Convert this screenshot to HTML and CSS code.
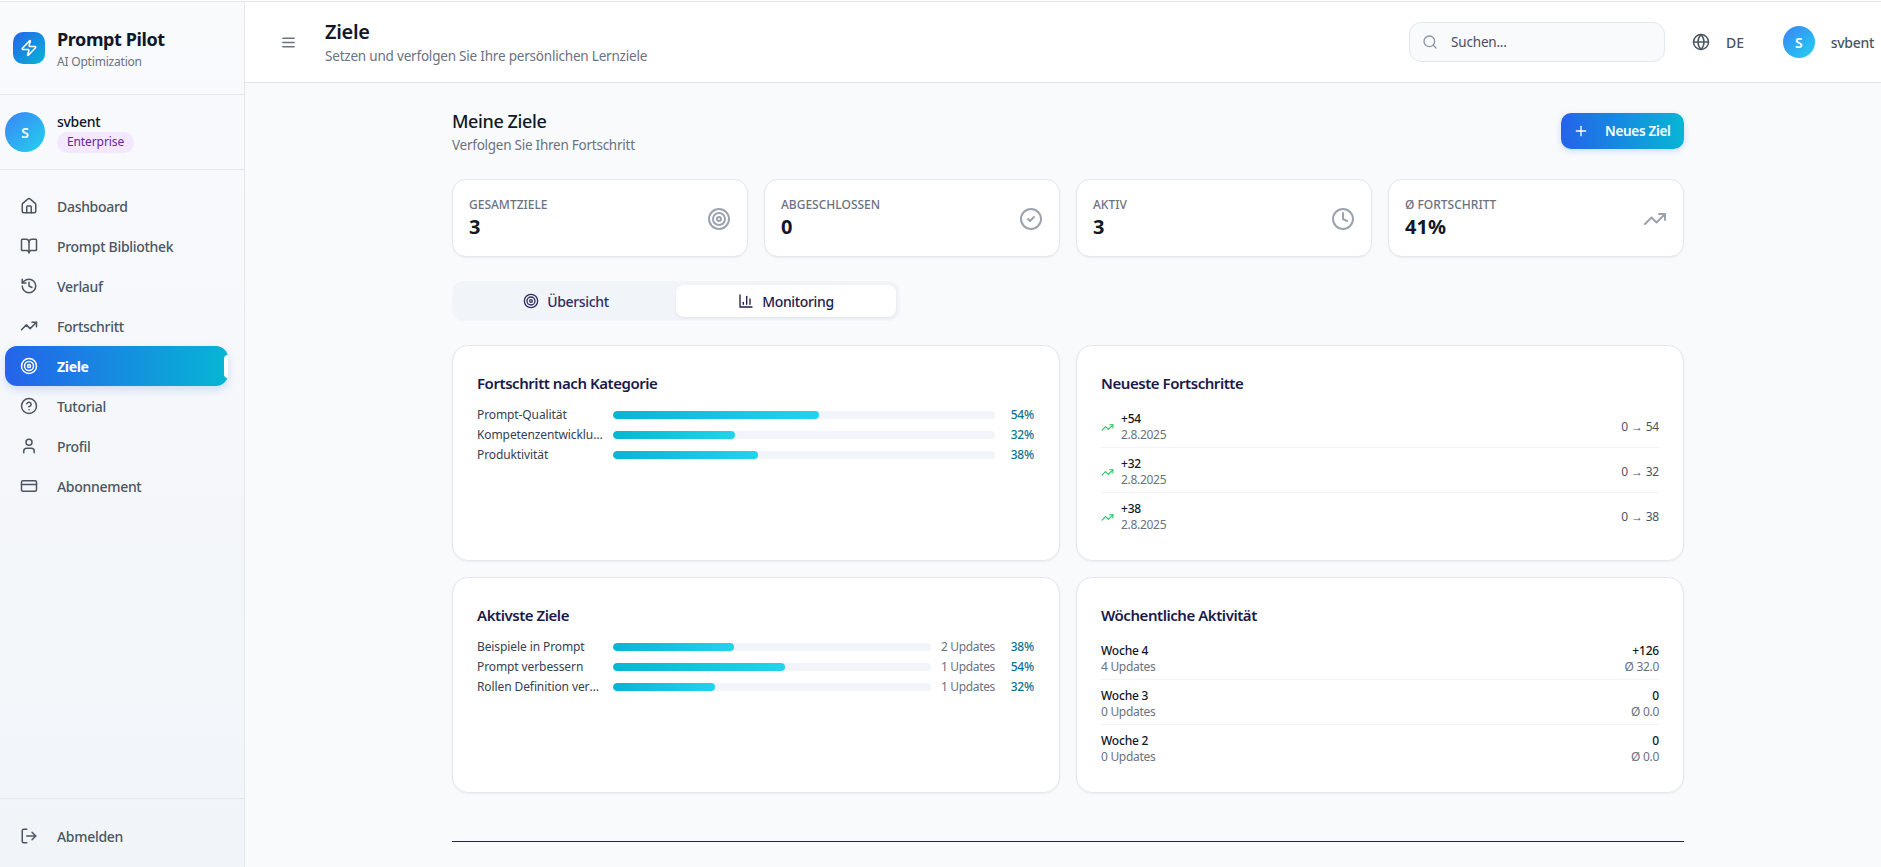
FILE: index.html
```html
<!DOCTYPE html>
<html lang="de">
<head>
<meta charset="utf-8">
<title>Ziele – Prompt Pilot</title>
<link rel="stylesheet" href="styles.css">
</head>
<body>
<svg class="sprite" aria-hidden="true">
  <symbol id="i-house" viewBox="0 0 24 24"><path d="M15 21v-8a1 1 0 0 0-1-1h-4a1 1 0 0 0-1 1v8"/><path d="M3 10a2 2 0 0 1 .709-1.528l7-5.999a2 2 0 0 1 2.582 0l7 5.999A2 2 0 0 1 21 10v9a2 2 0 0 1-2 2H5a2 2 0 0 1-2-2z"/></symbol>
  <symbol id="i-book" viewBox="0 0 24 24"><path d="M12 7v14"/><path d="M3 18a1 1 0 0 1-1-1V4a1 1 0 0 1 1-1h5a4 4 0 0 1 4 4 4 4 0 0 1 4-4h5a1 1 0 0 1 1 1v13a1 1 0 0 1-1 1h-6a3 3 0 0 0-3 3 3 3 0 0 0-3-3z"/></symbol>
  <symbol id="i-history" viewBox="0 0 24 24"><path d="M3 12a9 9 0 1 0 9-9 9.75 9.75 0 0 0-6.74 2.74L3 8"/><path d="M3 3v5h5"/><path d="M12 7v5l4 2"/></symbol>
  <symbol id="i-trend" viewBox="0 0 24 24"><polyline points="22 7 13.5 15.5 8.5 10.5 2 17"/><polyline points="16 7 22 7 22 13"/></symbol>
  <symbol id="i-target" viewBox="0 0 24 24"><circle cx="12" cy="12" r="10"/><circle cx="12" cy="12" r="6"/><circle cx="12" cy="12" r="2"/></symbol>
  <symbol id="i-help" viewBox="0 0 24 24"><circle cx="12" cy="12" r="10"/><path d="M9.09 9a3 3 0 0 1 5.83 1c0 2-3 3-3 3"/><path d="M12 17h.01"/></symbol>
  <symbol id="i-user" viewBox="0 0 24 24"><path d="M19 21v-2a4 4 0 0 0-4-4H9a4 4 0 0 0-4 4v2"/><circle cx="12" cy="7" r="4"/></symbol>
  <symbol id="i-card" viewBox="0 0 24 24"><rect x="2" y="5" width="20" height="14" rx="2"/><line x1="2" y1="10" x2="22" y2="10"/></symbol>
  <symbol id="i-logout" viewBox="0 0 24 24"><path d="M9 21H5a2 2 0 0 1-2-2V5a2 2 0 0 1 2-2h4"/><polyline points="16 17 21 12 16 7"/><line x1="21" y1="12" x2="9" y2="12"/></symbol>
  <symbol id="i-zap" viewBox="0 0 24 24"><path d="M4 14a1 1 0 0 1-.78-1.63l9.9-10.2a.5.5 0 0 1 .86.46l-1.92 6.02A1 1 0 0 0 13 10h7a1 1 0 0 1 .78 1.63l-9.9 10.2a.5.5 0 0 1-.86-.46l1.92-6.02A1 1 0 0 0 11 14z"/></symbol>
  <symbol id="i-menu" viewBox="0 0 24 24"><line x1="4" y1="6" x2="20" y2="6"/><line x1="4" y1="12" x2="20" y2="12"/><line x1="4" y1="18" x2="20" y2="18"/></symbol>
  <symbol id="i-search" viewBox="0 0 24 24"><circle cx="11" cy="11" r="8"/><path d="m21 21-4.3-4.3"/></symbol>
  <symbol id="i-globe" viewBox="0 0 24 24"><circle cx="12" cy="12" r="10"/><path d="M12 2a14.5 14.5 0 0 0 0 20 14.5 14.5 0 0 0 0-20"/><path d="M2 12h20"/></symbol>
  <symbol id="i-plus" viewBox="0 0 24 24"><path d="M5 12h14"/><path d="M12 5v14"/></symbol>
  <symbol id="i-check" viewBox="0 0 24 24"><circle cx="12" cy="12" r="10"/><path d="m9 12 2 2 4-4"/></symbol>
  <symbol id="i-clock" viewBox="0 0 24 24"><circle cx="12" cy="12" r="10"/><polyline points="12 6 12 12 16 14"/></symbol>
  <symbol id="i-chart" viewBox="0 0 24 24"><path d="M3 3v18h18"/><path d="M18 17V9"/><path d="M13 17V5"/><path d="M8 17v-3"/></symbol>
</svg>

<div class="topline"></div>
<div class="app">
  <aside class="sidebar">
    <div class="brand">
      <div class="logo"><svg class="icon icon-18"><use href="#i-zap"/></svg></div>
      <div>
        <div class="brand-name">Prompt Pilot</div>
        <div class="brand-sub">AI Optimization</div>
      </div>
    </div>
    <div class="account">
      <div class="avatar avatar-lg">S</div>
      <div>
        <div class="account-name">svbent</div>
        <span class="badge">Enterprise</span>
      </div>
    </div>
    <nav class="nav">
      <a class="nav-item"><svg class="icon icon-18"><use href="#i-house"/></svg>Dashboard</a>
      <a class="nav-item"><svg class="icon icon-18"><use href="#i-book"/></svg>Prompt Bibliothek</a>
      <a class="nav-item"><svg class="icon icon-18"><use href="#i-history"/></svg>Verlauf</a>
      <a class="nav-item"><svg class="icon icon-18"><use href="#i-trend"/></svg>Fortschritt</a>
      <a class="nav-item active"><svg class="icon icon-18"><use href="#i-target"/></svg>Ziele<span class="marker"></span></a>
      <a class="nav-item"><svg class="icon icon-18"><use href="#i-help"/></svg>Tutorial</a>
      <a class="nav-item"><svg class="icon icon-18"><use href="#i-user"/></svg>Profil</a>
      <a class="nav-item"><svg class="icon icon-18"><use href="#i-card"/></svg>Abonnement</a>
    </nav>
    <div class="sidebar-foot">
      <a class="nav-item"><svg class="icon icon-18"><use href="#i-logout"/></svg>Abmelden</a>
    </div>
  </aside>

  <div class="main">
    <header class="header">
      <svg class="icon menu-icon"><use href="#i-menu"/></svg>
      <div class="header-title">
        <h1>Ziele</h1>
        <p>Setzen und verfolgen Sie Ihre persönlichen Lernziele</p>
      </div>
      <div class="search"><svg class="icon icon-16"><use href="#i-search"/></svg><span>Suchen...</span></div>
      <svg class="icon icon-18 globe"><use href="#i-globe"/></svg>
      <span class="lang">DE</span>
      <div class="avatar avatar-sm">S</div>
      <span class="header-user">svbent</span>
    </header>

    <main class="page">
      <div class="page-head">
        <div>
          <h2>Meine Ziele</h2>
          <p>Verfolgen Sie Ihren Fortschritt</p>
        </div>
        <button class="primary"><svg class="icon icon-16"><use href="#i-plus"/></svg>Neues Ziel</button>
      </div>

      <section class="stats">
        <div class="stat"><div><div class="stat-label">Gesamtziele</div><div class="stat-value">3</div></div><svg class="icon icon-24"><use href="#i-target"/></svg></div>
        <div class="stat"><div><div class="stat-label">Abgeschlossen</div><div class="stat-value">0</div></div><svg class="icon icon-24"><use href="#i-check"/></svg></div>
        <div class="stat"><div><div class="stat-label">Aktiv</div><div class="stat-value">3</div></div><svg class="icon icon-24"><use href="#i-clock"/></svg></div>
        <div class="stat"><div><div class="stat-label">Ø Fortschritt</div><div class="stat-value">41%</div></div><svg class="icon icon-24"><use href="#i-trend"/></svg></div>
      </section>

      <div class="tabs">
        <div class="tab"><svg class="icon icon-16"><use href="#i-target"/></svg>Übersicht</div>
        <div class="tab selected"><svg class="icon icon-16"><use href="#i-chart"/></svg>Monitoring</div>
      </div>

      <section class="panels">
        <div class="panel">
          <h3>Fortschritt nach Kategorie</h3>
          <div class="bars">
            <div class="bar-row"><span class="bar-label">Prompt-Qualität</span><div class="track"><div class="fill" style="width:54%"></div></div><span class="pct">54%</span></div>
            <div class="bar-row"><span class="bar-label">Kompetenzentwicklung</span><div class="track"><div class="fill" style="width:32%"></div></div><span class="pct">32%</span></div>
            <div class="bar-row"><span class="bar-label">Produktivität</span><div class="track"><div class="fill" style="width:38%"></div></div><span class="pct">38%</span></div>
          </div>
        </div>

        <div class="panel">
          <h3>Neueste Fortschritte</h3>
          <div class="list">
            <div class="list-row"><svg class="icon up"><use href="#i-trend"/></svg><div class="grow"><div class="strong">+54</div><div class="muted">2.8.2025</div></div><span class="change">0 → 54</span></div>
            <div class="list-row"><svg class="icon up"><use href="#i-trend"/></svg><div class="grow"><div class="strong">+32</div><div class="muted">2.8.2025</div></div><span class="change">0 → 32</span></div>
            <div class="list-row"><svg class="icon up"><use href="#i-trend"/></svg><div class="grow"><div class="strong">+38</div><div class="muted">2.8.2025</div></div><span class="change">0 → 38</span></div>
          </div>
        </div>

        <div class="panel">
          <h3>Aktivste Ziele</h3>
          <div class="bars">
            <div class="bar-row"><span class="bar-label">Beispiele in Prompt</span><div class="track"><div class="fill" style="width:38%"></div></div><span class="updates">2 Updates</span><span class="pct">38%</span></div>
            <div class="bar-row"><span class="bar-label">Prompt verbessern</span><div class="track"><div class="fill" style="width:54%"></div></div><span class="updates">1 Updates</span><span class="pct">54%</span></div>
            <div class="bar-row"><span class="bar-label">Rollen Definition verbessern</span><div class="track"><div class="fill" style="width:32%"></div></div><span class="updates">1 Updates</span><span class="pct">32%</span></div>
          </div>
        </div>

        <div class="panel">
          <h3>Wöchentliche Aktivität</h3>
          <div class="list">
            <div class="list-row"><div class="grow"><div class="strong">Woche 4</div><div class="muted">4 Updates</div></div><div class="right"><div class="strong">+126</div><div class="muted">Ø 32.0</div></div></div>
            <div class="list-row"><div class="grow"><div class="strong">Woche 3</div><div class="muted">0 Updates</div></div><div class="right"><div class="strong">0</div><div class="muted">Ø 0.0</div></div></div>
            <div class="list-row"><div class="grow"><div class="strong">Woche 2</div><div class="muted">0 Updates</div></div><div class="right"><div class="strong">0</div><div class="muted">Ø 0.0</div></div></div>
          </div>
        </div>
      </section>

      <hr class="rule">
    </main>
  </div>
</div>
</body>
</html>
```

FILE: styles.css
```css
* { box-sizing: border-box; }
html, body { margin: 0; height: 100%; overflow: hidden; }
body {
  font-family: "Noto Sans", "Open Sans", "Liberation Sans", sans-serif;
  background: #f8fafc;
  color: #111827;
}
h1, h2, h3, p { margin: 0; }
.sprite { display: none; }

.icon {
  display: block;
  flex: none;
  fill: none;
  stroke: currentColor;
  stroke-width: 2;
  stroke-linecap: round;
  stroke-linejoin: round;
}
.icon-16 { width: 16px; height: 16px; }
.icon-18 { width: 18px; height: 18px; }
.icon-24 { width: 24px; height: 24px; }

.topline { height: 2px; background: #fff; border-bottom: 1px solid #e2e5e9; }
.app { display: flex; height: 865px; }

/* sidebar */
.sidebar {
  width: 245px;
  flex: none;
  display: flex;
  flex-direction: column;
  border-right: 1px solid #e2e8f0;
  background: linear-gradient(180deg, #f9fafc 0%, #f1f5f9 100%);
}
.brand {
  height: 93px;
  display: flex;
  align-items: center;
  gap: 12px;
  padding: 0 13px;
  border-bottom: 1px solid #e2e8f0;
}
.logo {
  width: 32px;
  height: 32px;
  border-radius: 10px;
  display: flex;
  align-items: center;
  justify-content: center;
  color: #fff;
  background: linear-gradient(135deg, #2563eb, #06b6d4);
}
.brand-name { font-size: 18px; line-height: 24px; font-weight: 700; letter-spacing: -0.4px; color: #0f172a; margin-top: 1px; }
.brand-sub { font-size: 12px; line-height: 16px; letter-spacing: -0.2px; color: #6b7280; margin-top: 3px; }
.account {
  height: 75px;
  display: flex;
  align-items: center;
  gap: 12px;
  padding: 0 5px;
  border-bottom: 1px solid #e2e8f0;
}
.avatar {
  border-radius: 50%;
  flex: none;
  color: #fff;
  font-weight: 600;
  display: flex;
  align-items: center;
  justify-content: center;
  background: linear-gradient(135deg, #3b82f6, #22d3ee);
}
.avatar-lg { width: 40px; height: 40px; font-size: 14px; }
.avatar-sm { width: 32px; height: 32px; font-size: 14px; margin-left: 39px; }
.account-name { font-size: 14px; line-height: 20px; font-weight: 500; letter-spacing: -0.3px; color: #111827; }
.badge {
  display: block;
  width: 77px;
  height: 21px;
  border-radius: 11px;
  background: #f3e8ff;
  color: #6b21a8;
  font-size: 12px;
  line-height: 20px;
  letter-spacing: -0.1px;
  text-align: center;
}
.nav { flex: 1; padding: 16px 16px 0 5px; }
.nav-item {
  position: relative;
  height: 40px;
  display: flex;
  align-items: center;
  gap: 19px;
  padding-left: 15px;
  border-radius: 12px;
  font-size: 14px;
  font-weight: 500;
  letter-spacing: -0.3px;
  color: #4b5563;
}
.nav-item.active {
  color: #fff;
  font-weight: 700;
  background: linear-gradient(90deg, #2563eb, #06b6d4);
  box-shadow: 0 4px 8px rgba(37, 99, 235, 0.18);
}
.marker {
  position: absolute;
  right: 0;
  top: 9px;
  width: 4px;
  height: 23px;
  background: #fff;
  border-radius: 4px 0 0 4px;
}
.sidebar-foot {
  height: 69px;
  padding: 17px 16px 0 5px;
  border-top: 1px solid #e2e8f0;
}

/* header */
.main { flex: 1; min-width: 0; }
.header {
  height: 81px;
  display: flex;
  align-items: center;
  padding: 0 7px 0 35px;
  background: #fff;
  border-bottom: 1px solid #e2e5e9;
}
.menu-icon { width: 17px; height: 17px; color: #6b7280; margin: 1px 1px 0 0; }
.header-title { flex: 1; margin-left: 27px; }
.header-title h1 { font-size: 20px; line-height: 28px; font-weight: 600; letter-spacing: -0.3px; color: #111827; }
.header-title p { font-size: 13.5px; line-height: 20px; letter-spacing: -0.2px; color: #6b7280; }
.search {
  width: 256px;
  height: 40px;
  display: flex;
  align-items: center;
  gap: 13px;
  padding-left: 12px;
  border: 1px solid #e2e8f0;
  border-radius: 12px;
  background: #f8fafc;
  font-size: 13.5px;
  letter-spacing: -0.2px;
  color: #4b4a68;
}
.search .icon { color: #8b95a3; }
.globe { color: #4b5563; margin-left: 27px; }
.lang { margin-left: 16px; font-size: 14px; font-weight: 500; letter-spacing: -0.2px; color: #4b5563; }
.header-user { margin-left: 16px; font-size: 14px; font-weight: 500; letter-spacing: -0.3px; color: #4b5563; }

/* page */
.page { width: 1232px; margin-left: 207px; }
.page-head {
  height: 80px;
  padding-top: 24px;
  display: flex;
  justify-content: space-between;
  align-items: flex-start;
}
.page-head h2 { font-size: 18px; line-height: 28px; font-weight: 500; letter-spacing: -0.4px; color: #111827; }
.page-head p { font-size: 13.5px; line-height: 20px; letter-spacing: -0.25px; color: #6b7280; }
.primary {
  width: 123px;
  height: 36px;
  margin-top: 6px;
  padding: 0 0 0 12px;
  display: flex;
  align-items: center;
  gap: 16px;
  border: 0;
  border-radius: 10px;
  color: #fff;
  font: 600 13.5px "Noto Sans", sans-serif;
  letter-spacing: -0.3px;
  background: linear-gradient(90deg, #2563eb, #06b6d4);
  box-shadow: 0 2px 6px rgba(37, 99, 235, 0.2);
}

.stats { display: grid; grid-template-columns: repeat(4, 1fr); gap: 16px; margin-top: 16px; }
.stat {
  height: 78px;
  padding: 17px 16px 16px;
  display: flex;
  justify-content: space-between;
  align-items: center;
  background: #fff;
  border: 1px solid #e5e7eb;
  border-radius: 14px;
  box-shadow: 0 1px 2px rgba(15, 23, 42, 0.05);
}
.stat > div { align-self: flex-start; }
.stat .icon { color: #9ca3af; }
.stat-label { font-size: 12px; line-height: 16px; font-weight: 500; color: #6b7280; text-transform: uppercase; }
.stat-value { font-size: 20px; line-height: 28px; font-weight: 700; color: #111827; }

.tabs {
  width: 448px;
  height: 40px;
  margin-top: 24px;
  padding: 4px;
  display: grid;
  grid-template-columns: 1fr 1fr;
  background: #f1f5f9;
  border-radius: 12px;
}
.tab {
  display: flex;
  align-items: center;
  justify-content: center;
  gap: 8px;
  border-radius: 8px;
  font-size: 14px;
  font-weight: 500;
  letter-spacing: -0.35px;
  color: #312e62;
}
.tab.selected { background: #fff; color: #1e1b4b; box-shadow: 0 1px 3px rgba(15, 23, 42, 0.08); }

.panels { display: grid; grid-template-columns: 1fr 1fr; grid-auto-rows: 216px; gap: 16px; margin-top: 24px; }
.panel {
  padding: 25px 24px;
  background: #fff;
  border: 1px solid #e5e7eb;
  border-radius: 16px;
  box-shadow: 0 1px 2px rgba(15, 23, 42, 0.05);
}
.panel h3 { font-size: 15px; line-height: 24px; font-weight: 600; letter-spacing: -0.45px; color: #1a1a4a; }

.bars { margin-top: 12px; display: flex; flex-direction: column; gap: 4px; }
.bar-row { display: flex; align-items: center; height: 16px; font-size: 12px; line-height: 16px; }
.bar-label { width: 128px; margin-right: 8px; flex: none; color: #374151; letter-spacing: -0.1px; white-space: nowrap; overflow: hidden; text-overflow: ellipsis; }
.track { flex: 1; height: 8px; border-radius: 4px; background: #f1f5f9; overflow: hidden; }
.fill { height: 100%; border-radius: 4px; background: linear-gradient(90deg, #06b6d4, #22d3ee); }
.pct { width: 24px; margin: 0 1px 0 15px; flex: none; text-align: right; font-weight: 500; letter-spacing: -0.2px; color: #0e7490; white-space: nowrap; }
.updates { width: 53px; margin-left: 10px; flex: none; color: #6b7280; letter-spacing: -0.35px; white-space: nowrap; }
.updates + .pct { margin-left: 16px; }

.list { margin-top: 16px; display: flex; flex-direction: column; gap: 8px; }
.list-row {
  display: flex;
  align-items: center;
  padding-bottom: 4px;
  border-bottom: 1px solid #f1f5f9;
  font-size: 12px;
  line-height: 16px;
}
.list-row:last-child { border-bottom: 0; }
.up { width: 13px; height: 13px; color: #22c55e; margin-right: 7px; }
.grow { flex: 1; }
.strong { font-weight: 500; letter-spacing: -0.2px; color: #111827; }
.muted { letter-spacing: -0.3px; color: #6b7280; }
.change { letter-spacing: -0.2px; color: #4b5563; }
.right { text-align: right; }

.rule { margin: 48px 0 0; border: 0; border-top: 1px solid #1e293b; }
```
